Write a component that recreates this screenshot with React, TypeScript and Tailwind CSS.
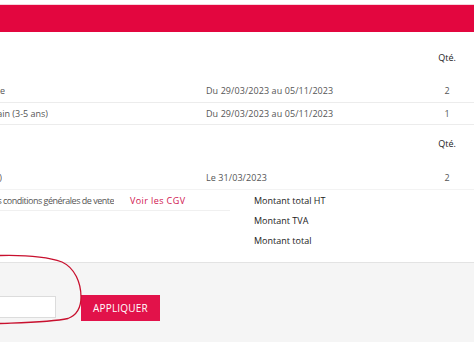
const rows = [
  { name: 'Pass journée Adulte', clip: 'w-[5px]', dates: 'Du 29/03/2023 au 05/11/2023', qty: 2 },
  { name: 'Pass journée Enfant sans bain (3-5 ans)', clip: 'w-[48px]', dates: 'Du 29/03/2023 au 05/11/2023', qty: 1 },
];

function Qty({ children }: { children: React.ReactNode }) {
  return <div className="w-[40px] text-center">{children}</div>;
}

export default function App() {
  return (
    <div className="relative w-[474px] h-[342px] overflow-hidden bg-[#f5f5f5] font-['Open_Sans',sans-serif] text-[9px] leading-[12px] text-[#555]">
      <div className="h-[5px] bg-white border-b border-[#f6d3dc]" />
      <div className="h-[27px] bg-[#e3063f]" />

      <div className="bg-white border-b border-[#e3e3e3]">
        {/* billets */}
        <div className="h-[48px] flex items-start justify-end pt-[20px] pr-[7px]">
          <Qty>
            <span className="font-medium text-[#222]">Qté.</span>
          </Qty>
        </div>
        {rows.map((r, i) => (
          <div key={i} className={`flex items-center pr-[7px] border-b border-[#ececec] ${i === 0 ? 'h-[23px]' : 'h-[22px]'}`}>
            <div className="w-[206px] shrink-0">
              <div className={`${r.clip} flex justify-end overflow-hidden whitespace-nowrap`}>{r.name}</div>
            </div>
            <div className="flex-1 tracking-[0.08px]">{r.dates}</div>
            <Qty>{r.qty}</Qty>
          </div>
        ))}

        {/* options */}
        <div className="h-[41px] flex items-start justify-end pt-[13px] pr-[7px]">
          <Qty>
            <span className="font-medium text-[#222]">Qté.</span>
          </Qty>
        </div>
        <div className="h-[24px] flex items-center pr-[7px] border-b border-[#f3f3f3]">
          <div className="w-[206px] shrink-0">
            <div className="w-[2px] flex justify-end overflow-hidden whitespace-nowrap">Parking (1 jour)</div>
          </div>
          <div className="flex-1 tracking-[0.08px]">Le 31/03/2023</div>
          <Qty>2</Qty>
        </div>

        {/* cgv + totaux */}
        <div className="flex pt-[1px] pb-[11px]">
          <div className="w-[254px] shrink-0">
            <div className="w-[230px] h-[20px] flex items-center border-b border-[#f0f0f0]">
              <div className="w-[114px] flex justify-end overflow-hidden whitespace-nowrap tracking-[-0.5px]">
                J&apos;accepte les conditions générales de vente
              </div>
              <a className="ml-[16px] text-[#d0144f] font-medium tracking-[0.4px]">Voir les CGV</a>
            </div>
          </div>
          <div className="flex flex-col font-medium text-[#222]">
            <div className="h-[20px] flex items-center">Montant total HT</div>
            <div className="h-[20px] flex items-center">Montant TVA</div>
            <div className="h-[20px] flex items-center">Montant total</div>
          </div>
        </div>
      </div>

      {/* code promo */}
      <div className="flex items-start pt-[32px]">
        <input
          type="text"
          className="w-[56px] h-[22px] mt-[1px] bg-white border border-l-0 border-[#dcdcdc] outline-none"
        />
        <button className="ml-[25px] h-[26px] px-[12px] bg-[#e2124a] text-white text-[10px] font-medium tracking-[0.2px]">
          APPLIQUER
        </button>
      </div>

      {/* annotation au feutre */}
      <svg className="absolute left-0 top-0 pointer-events-none" width="474" height="342" viewBox="0 0 474 342" fill="none">
        <path
          d="M0 255.5 C 20 255, 45 256, 62 262 C 75 268, 81 283, 81 297 C 81 308, 77 315, 68 318.5 C 52 322, 25 322.5, 0 323.5"
          stroke="#c8102e"
          strokeWidth="1.3"
          strokeLinecap="round"
        />
      </svg>
    </div>
  );
}
